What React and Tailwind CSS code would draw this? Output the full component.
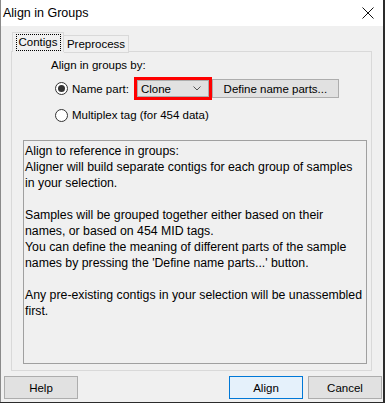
export default function App() {
  const font = { fontFamily: '"Liberation Sans", Arial, sans-serif' };
  const lines = [
    "Align to reference in groups:",
    "Aligner will build separate contigs for each group of samples",
    "in your selection.",
    "",
    "Samples will be grouped together either based on their",
    "names, or based on 454 MID tags.",
    "You can define the meaning of different parts of the sample",
    "names by pressing the 'Define name parts...' button.",
    "",
    "Any pre-existing contigs in your selection will be unassembled",
    "first.",
  ];
  return (
    <div className="w-[385px] h-[403px] bg-[#2b2b2b] overflow-hidden" style={font}>
      <div className="w-[383px] h-[402px] bg-[#f0f0f0] border-l border-[#8a8a8a] flex flex-col text-black">
        {/* Title bar */}
        <div className="h-[26px] bg-white flex items-center justify-between pl-[2px] pr-[8px] shrink-0">
          <span className="text-[12.5px] leading-[14px] text-black">Align in Groups</span>
          <svg width="12" height="12" viewBox="0 0 12 12" className="mr-[1px]">
            <path d="M0.5 0.5 L11.5 11.5 M11.5 0.5 L0.5 11.5" stroke="#111" strokeWidth="1" fill="none" />
          </svg>
        </div>

        {/* Tabs */}
        <div className="flex items-end h-[20px] mt-[6px] ml-[11px] relative z-10 shrink-0">
          <div className="w-[52px] h-[20px] bg-[#f0f0f0] border border-b-0 border-[#d9d9d9] flex items-start justify-center pt-[1px]">
            <span className="border border-dotted border-black px-[2px] h-[17px] flex items-center text-[11.5px] leading-[13px]">
              Contigs
            </span>
          </div>
          <div className="w-[65px] h-[18px] mb-[-1px] bg-[#f0f0f0] border border-l-0 border-[#d9d9d9] flex items-center justify-center text-[11.5px] leading-[13px]">
            Preprocess
          </div>
        </div>

        {/* Panel */}
        <div className="w-[361px] h-[320px] mt-[-1px] ml-[10px] border border-[#d9d9d9] flex flex-col shrink-0">
          <div className="ml-[39px] mt-[6px] text-[11.5px] leading-[14px]">Align in groups by:</div>

          <div className="flex items-center h-[23px] mt-[5px] ml-[43px]">
            <span className="w-[13px] h-[13px] rounded-full border border-[#333] bg-white flex items-center justify-center">
              <span className="w-[7px] h-[7px] rounded-full bg-[#333]" />
            </span>
            <span className="ml-[4px] text-[11.5px] leading-[14px]">Name part:</span>
            <div className="ml-[5px] w-[78px] h-[23px] border-[3px] border-[#ff0000] flex">
              <div className="flex-1 bg-[#e1e1e1] border border-[#adadad] flex items-center justify-between pl-[3px] pr-[7px] text-[11.5px] leading-[14px]">
                <span>Clone</span>
                <svg width="8" height="5" viewBox="0 0 8 5">
                  <path d="M0.5 0.5 L4 4 L7.5 0.5" stroke="#555" strokeWidth="1" fill="none" />
                </svg>
              </div>
            </div>
            <div className="w-[127px] h-[19px] bg-[#e1e1e1] border border-[#adadad] flex items-center justify-center text-[11.5px] leading-[14px]">
              Define name parts...
            </div>
          </div>

          <div className="flex items-center h-[14px] mt-[8px] ml-[43px]">
            <span className="w-[13px] h-[13px] rounded-full border border-[#333] bg-white" />
            <span className="ml-[4px] text-[11.5px] leading-[14px]">Multiplex tag (for 454 data)</span>
          </div>

          <div className="mt-[18px] ml-[11px] w-[344px] h-[224px] border border-[#a0a0a0] bg-[#f0f0f0] pl-[1px] pt-[2px] text-[12.3px] leading-[16px]">
            {lines.map((l, i) => (
              <div key={i} className="h-[16px] whitespace-nowrap">{l}</div>
            ))}
          </div>
        </div>

        {/* Footer */}
        <div className="flex mt-[5px] shrink-0">
          <div className="ml-[3px] w-[74px] h-[23px] bg-[#e1e1e1] border border-[#adadad] flex items-center justify-center text-[11.5px] leading-[14px]">
            Help
          </div>
          <div className="flex-1" />
          <div className="w-[74px] h-[23px] bg-[#e5f1fb] border border-[#0078d7] flex items-center justify-center text-[11.5px] leading-[14px]">
            Align
          </div>
          <div className="ml-[5px] mr-[1px] w-[74px] h-[23px] bg-[#e1e1e1] border border-[#adadad] flex items-center justify-center text-[11.5px] leading-[14px]">
            Cancel
          </div>
        </div>
      </div>
    </div>
  );
}
